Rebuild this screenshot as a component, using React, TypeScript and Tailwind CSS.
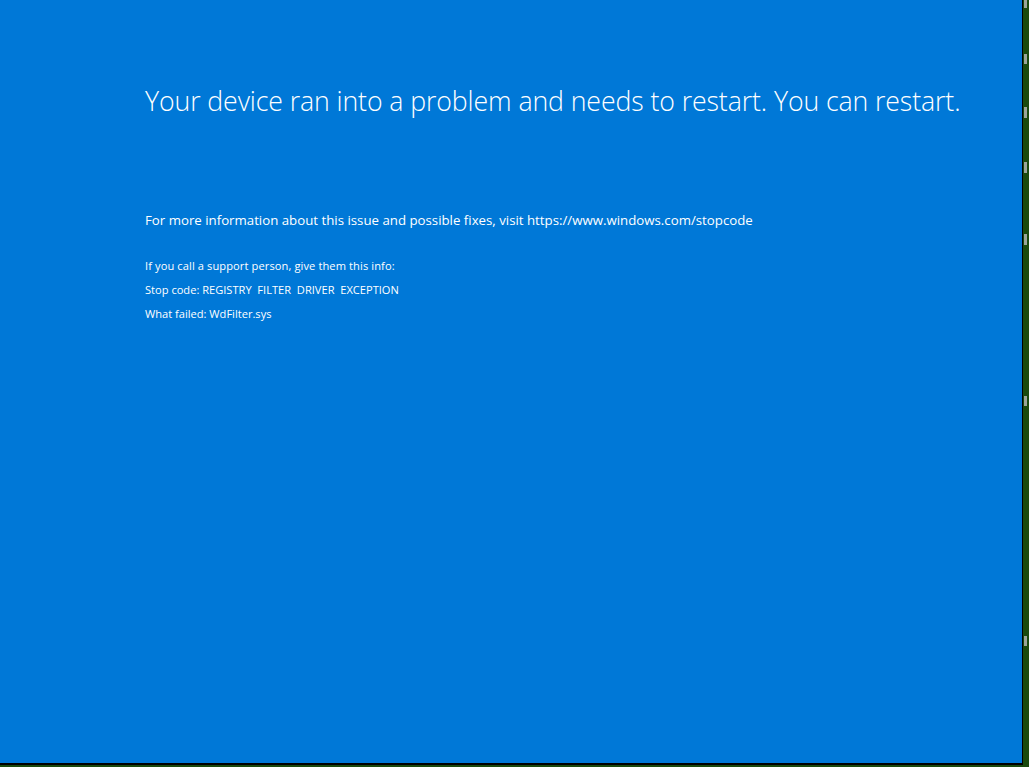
export default function App() {
  const marks = [
    { top: 'mt-0', h: 'h-[8px]' },
    { top: 'mt-[46px]', h: 'h-[10px]' },
    { top: 'mt-[43px]', h: 'h-[11px]' },
    { top: 'mt-[44px]', h: 'h-[11px]' },
    { top: 'mt-[61px]', h: 'h-[11px]' },
    { top: 'mt-[151px]', h: 'h-[10px]' },
    { top: 'mt-[230px]', h: 'h-[10px]' },
  ];
  return (
    <div className="flex h-[767px] w-[1029px] overflow-hidden bg-[#1a4a0e]">
      <div className="flex h-[765px] w-[1023px] flex-col border-r border-b-2 border-black bg-[#0078d7] pl-[145px] pt-[84px] text-white [font-family:'Open_Sans','Noto_Sans',sans-serif]">
        <h1 className="text-[26.7px] font-light leading-[34px] tracking-[-0.1px] whitespace-nowrap">
          Your device ran into a problem and needs to restart. You can restart.
        </h1>
        <p className="mt-[93px] text-[13.25px] leading-[18px] whitespace-nowrap">
          For more information about this issue and possible fixes, visit https://www.windows.com/stopcode
        </p>
        <div className="mt-[29px] flex flex-col gap-[8px] text-[11.1px] leading-[16px] whitespace-nowrap">
          <p className="tracking-[0.1px]">If you call a support person, give them this info:</p>
          <p>Stop code: REGISTRY&nbsp; FILTER&nbsp; DRIVER&nbsp; EXCEPTION</p>
          <p>What failed: WdFilter.sys</p>
        </div>
      </div>
      {/* sliver of the window behind */}
      <div className="flex flex-1 flex-col pl-[1px]">
        {marks.map((m, i) => (
          <span key={i} className={`${m.top} ${m.h} w-[3px] bg-[#9aa59a]`} />
        ))}
      </div>
    </div>
  );
}
